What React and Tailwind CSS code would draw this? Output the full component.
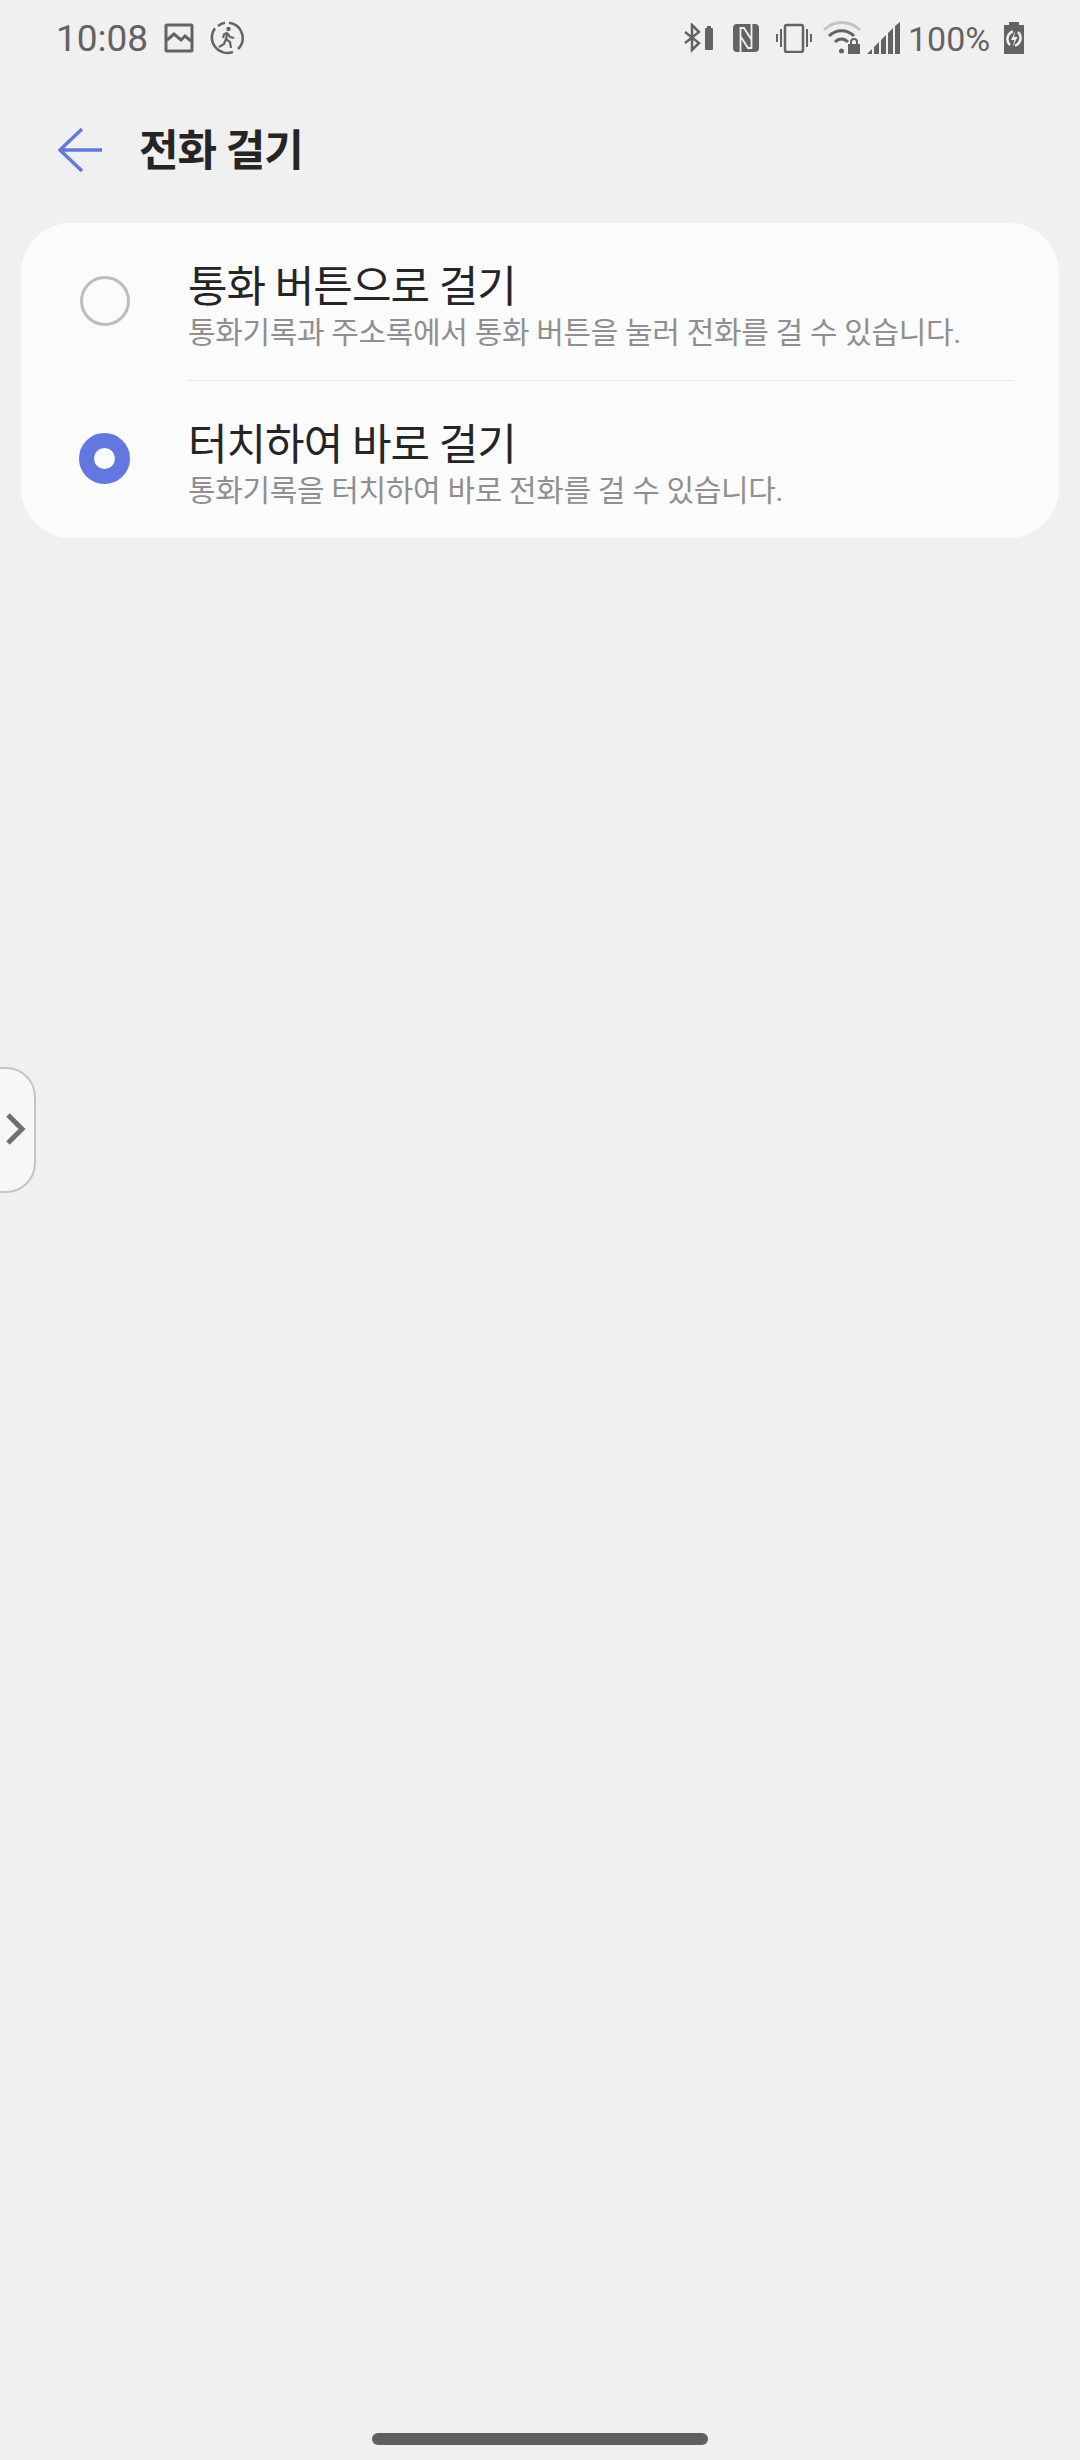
const FONT = '"Roboto", "Noto Sans CJK KR", sans-serif';

function GalleryIcon() {
  return (
    <svg width="30" height="30" viewBox="0 0 30 30" fill="none">
      <rect x="2" y="2" width="26" height="26" rx="1" stroke="#636363" strokeWidth="3" />
      <path d="M3 17L10 11L17 17L21 13L27 18" stroke="#636363" strokeWidth="3" />
    </svg>
  );
}

function WalkIcon() {
  return (
    <svg width="34" height="34" viewBox="0 0 34 34" fill="none" className="ml-[16px]">
      <path d="M19 1.700A15.400 15.400 0 0 1 28 28M23 30.800A15.400 15.400 0 0 1 5 7.200M8 5A15.400 15.400 0 0 1 15 1.700" stroke="#636363" strokeWidth="2.500" />
      <circle cx="18.500" cy="8" r="2.200" fill="#636363" />
      <path d="M17.500 11.500L14 13.500L13 17M17.500 11.500L16 18L20 21L21 27M16 18L14 23L9 26M18 13L20 16L24 17" stroke="#636363" strokeWidth="2.200" />
    </svg>
  );
}

function StatusBar() {
  return (
    <div className="flex items-center justify-between h-[75px] pl-[56px] pr-[55px] text-[#636363]">
      <div className="flex items-center">
        <span className="w-[108px] mt-[3px] text-[37px] leading-[42px]">10:08</span>
        <GalleryIcon />
        <WalkIcon />
      </div>
      <div className="flex items-center">
        {/* bluetooth + small battery */}
        <svg width="32" height="30" viewBox="0 0 32 30" fill="none">
          <path d="M1 9L15 20L8 27V2L15 9L1 20" stroke="#636363" strokeWidth="2.500" />
          <rect x="21" y="5" width="8" height="22" rx="1" fill="#636363" />
          <rect x="23" y="3" width="4" height="3" fill="#636363" />
        </svg>
        {/* nfc */}
        <svg width="26" height="28" viewBox="0 0 26 28" className="ml-[17px]">
          <rect x="0" y="0" width="26" height="28" rx="4" fill="#636363" />
          <path d="M7.500 28V4H11L18 15M18.500 0V24H15L8 13" fill="none" stroke="#f0f0f0" strokeWidth="1.800" />
        </svg>
        {/* vibrate */}
        <svg width="36" height="30" viewBox="0 0 36 30" fill="none" className="ml-[17px]">
          <rect x="9" y="2" width="18" height="27" rx="2" stroke="#636363" strokeWidth="2.500" />
          <path d="M5 6V24M1 11V19M31 6V24M35 11V19" stroke="#636363" strokeWidth="2" />
        </svg>
        {/* wifi + lock */}
        <svg width="40" height="34" viewBox="0 0 40 34" fill="none" className="ml-[10px]">
          <path d="M2 9C12 -1 28 -1 38 9" stroke="#c4c4c4" strokeWidth="3" />
          <path d="M7 15C14 8 25 8 32 15" stroke="#636363" strokeWidth="3" />
          <path d="M13 21C17 17 22 17 26 21" stroke="#636363" strokeWidth="3" />
          <circle cx="19.500" cy="30" r="2.500" fill="#636363" />
          <rect x="26" y="23" width="12" height="10" fill="#636363" />
          <path d="M29 23V21A3 3 0 0 1 35 21V23" stroke="#636363" strokeWidth="2" />
        </svg>
        {/* signal bars */}
        <svg width="34" height="34" viewBox="0 0 34 34" fill="#636363" className="ml-[5px]">
          <path d="M0 33L5 28V33Z" />
          <path d="M7 26L12 21V33H7Z" />
          <path d="M14 19L19 14V33H14Z" />
          <path d="M21 12L26 7V33H21Z" />
          <path d="M28 5L33 1V33H28Z" />
        </svg>
        <span className="w-[93px] ml-[7px] mt-[3px] text-[34px] leading-[42px]">100%</span>
        {/* charging battery */}
        <svg width="22" height="34" viewBox="0 0 22 34" className="ml-[2px]">
          <path d="M6 1H16V4H21V33H1V4H6Z" fill="#636363" />
          <path d="M10 10.500A8 8 0 0 0 7 24M12 24.500A8 8 0 0 0 15 11" fill="none" stroke="#f0f0f0" strokeWidth="2.500" />
          <path d="M12.500 10L8 19H11.500L9.500 26L14.500 16H11Z" fill="#f0f0f0" />
        </svg>
      </div>
    </div>
  );
}

function Option({ title, desc, selected }) {
  return (
    <div className="flex items-center h-[157px]">
      <div className="w-[167px] -mt-[2px] flex justify-center shrink-0">
        {selected ? (
          <div className="w-[51px] h-[51px] rounded-full border-[15px] border-[#6278e0] bg-[#fbfbfb]" />
        ) : (
          <div className="w-[50px] h-[50px] rounded-full border-[3px] border-[#bdbdbd]" />
        )}
      </div>
      <div className="flex flex-col pt-[7px]">
        <span className="text-[43px] leading-[56px] text-[#252525] tracking-[-1px]">{title}</span>
        <span className="-mt-[1px] text-[30px] leading-[38px] text-[#8f8f8f] tracking-[-0.35px]">{desc}</span>
      </div>
    </div>
  );
}

export default function App() {
  return (
    <div className="relative flex flex-col w-[1080px] h-[2460px] bg-[#f0f0f0] overflow-hidden" style={{ fontFamily: FONT }}>
      <StatusBar />

      {/* Title bar */}
      <div className="flex items-center h-[74px] mt-[38px] pl-[58px]">
        <svg width="46" height="46" viewBox="0 0 46 46" fill="none">
          <path d="M2 23H44M24 2L2 23L24 44" stroke="#6278e0" strokeWidth="3.500" />
        </svg>
        <h1 className="ml-[35px] mt-[3px] text-[43px] font-bold text-[#252525] tracking-[-1px]">전화 걸기</h1>
      </div>

      {/* Options card */}
      <div className="ml-[21px] mt-[36px] w-[1038px] h-[315px] bg-[#fbfbfb] rounded-[50px] overflow-hidden">
        <Option title="통화 버튼으로 걸기" desc="통화기록과 주소록에서 통화 버튼을 눌러 전화를 걸 수 있습니다." />
        <div className="ml-[167px] mr-[46px] h-px bg-[#e8e8e8]" />
        <Option title="터치하여 바로 걸기" desc="통화기록을 터치하여 바로 전화를 걸 수 있습니다." selected />
      </div>

      {/* Edge panel handle */}
      <div className="absolute left-[-40px] top-[1067px] w-[76px] h-[126px] rounded-[30px] border-2 border-[#c4c4c4] bg-[#f7f7f7]" />
      <svg width="22" height="34" viewBox="0 0 22 34" fill="none" className="absolute left-[5px] top-[1112px]">
        <path d="M3 3L17 17L3 31" stroke="#6f6f6f" strokeWidth="5" />
      </svg>

      {/* Home indicator */}
      <div className="mt-auto mb-[15px] self-center w-[336px] h-[12px] rounded-full bg-[#606060]" />
    </div>
  );
}
